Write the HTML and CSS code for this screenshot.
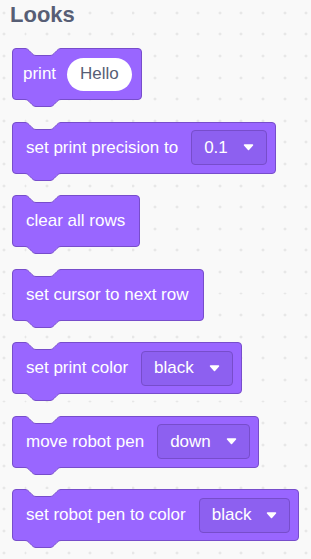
FILE: index.html
```html
<!DOCTYPE html>
<html lang="en">
    <head>
        <meta charset="utf-8">
        <title>Looks</title>
        <meta name="viewport" content="width=device-width, initial-scale=1">
        <link rel="stylesheet" href="styles.css">
    </head>
    <body>
		<main class="palette">
			<h2 class="category-title">Looks</h2>

			<section class="blocks">
				<!-- print -->
				<div class="block block-input">
					<span class="label">print</span>
					<span class="text-input">Hello</span>
				</div>

				<div class="block block-field">
					<span class="label">set print precision to</span>
					<span class="dropdown">0.1
						<svg class="arrow" width="11" height="7" viewBox="0 0 11 7"><path d="M1.5,1 H9.5 L5.5,5.5 Z" /></svg>
					</span>
				</div>

				<div class="block">
					<span class="label">clear all rows</span>
				</div>

				<div class="block">
					<span class="label">set cursor to next row</span>
				</div>

				<div class="block block-field">
					<span class="label">set print color</span>
					<span class="dropdown">black
						<svg class="arrow" width="11" height="7" viewBox="0 0 11 7"><path d="M1.5,1 H9.5 L5.5,5.5 Z" /></svg>
					</span>
				</div>

				<div class="block block-field">
					<span class="label">move robot pen</span>
					<span class="dropdown">down
						<svg class="arrow" width="11" height="7" viewBox="0 0 11 7"><path d="M1.5,1 H9.5 L5.5,5.5 Z" /></svg>
					</span>
				</div>

				<div class="block block-field">
					<span class="label">set robot pen to color</span>
					<span class="dropdown">black
						<svg class="arrow" width="11" height="7" viewBox="0 0 11 7"><path d="M1.5,1 H9.5 L5.5,5.5 Z" /></svg>
					</span>
				</div>
			</section>
		</main>
    </body>
</html>
```

FILE: styles.css
```css
/* Reset */
*,
*::after,
*::before {
	margin: 0;
	padding: 0;
	box-sizing: border-box;
}

/* Base */
body {
	font-family: "Liberation Sans", Arial, sans-serif;
	height: 100vh;
	background-color: #f9f9f9;
	background-image: url("data:image/svg+xml,%3Csvg xmlns='http://www.w3.org/2000/svg' width='21.6' height='21.6'%3E%3Cpath d='M10.8 9.3v3M9.3 10.8h3' stroke='%23e1e1e1' stroke-width='1'/%3E%3C/svg%3E");
	background-size: 21.6px 21.6px;
	background-position: -6.9px 2px;
	overflow: hidden;
}

.palette {
	padding: 2px 0 0 10px;
}

.category-title {
	font-size: 22px;
	line-height: 26px;
	font-weight: bold;
	color: #575e75;
}

/* Blocks */
.blocks {
	display: flex;
	flex-direction: column;
	align-items: flex-start;
	gap: 21.5px;
	margin-top: 20px;
	margin-left: 2px;
}

.block {
	position: relative;
	display: inline-flex;
	align-items: center;
	gap: 13px;
	height: 52px;
	padding: 0 14px 0 13px;
	background: #9966ff;
	border: 1px solid #774dcb;
	border-radius: 4px;
	color: #fff;
	font-size: 17px;
	white-space: nowrap;
}

/* notch on top */
.block::before {
	content: "";
	position: absolute;
	top: -1px;
	left: 12px;
	width: 36px;
	height: 9px;
	background: url("data:image/svg+xml,%3Csvg xmlns='http://www.w3.org/2000/svg' width='36' height='9'%3E%3Cpath d='M0,0 V0.5 c2,0 3,1 4,2 l3,3 c1,1 2,2 4,2 h14 c2,0 3,-1 4,-2 l3,-3 c1,-1 2,-2 4,-2 V0 Z' fill='%23f9f9f9'/%3E%3Cpath d='M0,0.5 c2,0 3,1 4,2 l3,3 c1,1 2,2 4,2 h14 c2,0 3,-1 4,-2 l3,-3 c1,-1 2,-2 4,-2' fill='none' stroke='%23774dcb'/%3E%3C/svg%3E") no-repeat;
}

/* tab at the bottom */
.block::after {
	content: "";
	position: absolute;
	top: 100%;
	left: 12px;
	width: 36px;
	height: 9px;
	background: url("data:image/svg+xml,%3Csvg xmlns='http://www.w3.org/2000/svg' width='36' height='9'%3E%3Crect x='0' y='0' width='36' height='1' fill='%239966ff'/%3E%3Cpath d='M0,0.5 c2,0 3,1 4,2 l3,3 c1,1 2,2 4,2 h14 c2,0 3,-1 4,-2 l3,-3 c1,-1 2,-2 4,-2' fill='%239966ff' stroke='%23774dcb'/%3E%3C/svg%3E") no-repeat;
}

.block-field {
	padding-right: 8px;
}

.block-input {
	padding: 0 9px 0 10px;
	gap: 11px;
}

.text-input {
	display: inline-flex;
	align-items: center;
	height: 33px;
	padding: 0 13px;
	background: #fff;
	border-radius: 17px;
	color: #575e75;
}

.dropdown {
	display: inline-flex;
	align-items: center;
	gap: 15px;
	height: 35px;
	padding: 0 12px 0 12px;
	background: #8d60f0;
	border: 1px solid #774dcb;
	border-radius: 4px;
}

.arrow path {
	fill: #fff;
	stroke: #fff;
	stroke-width: 1.5;
	stroke-linejoin: round;
}
```
